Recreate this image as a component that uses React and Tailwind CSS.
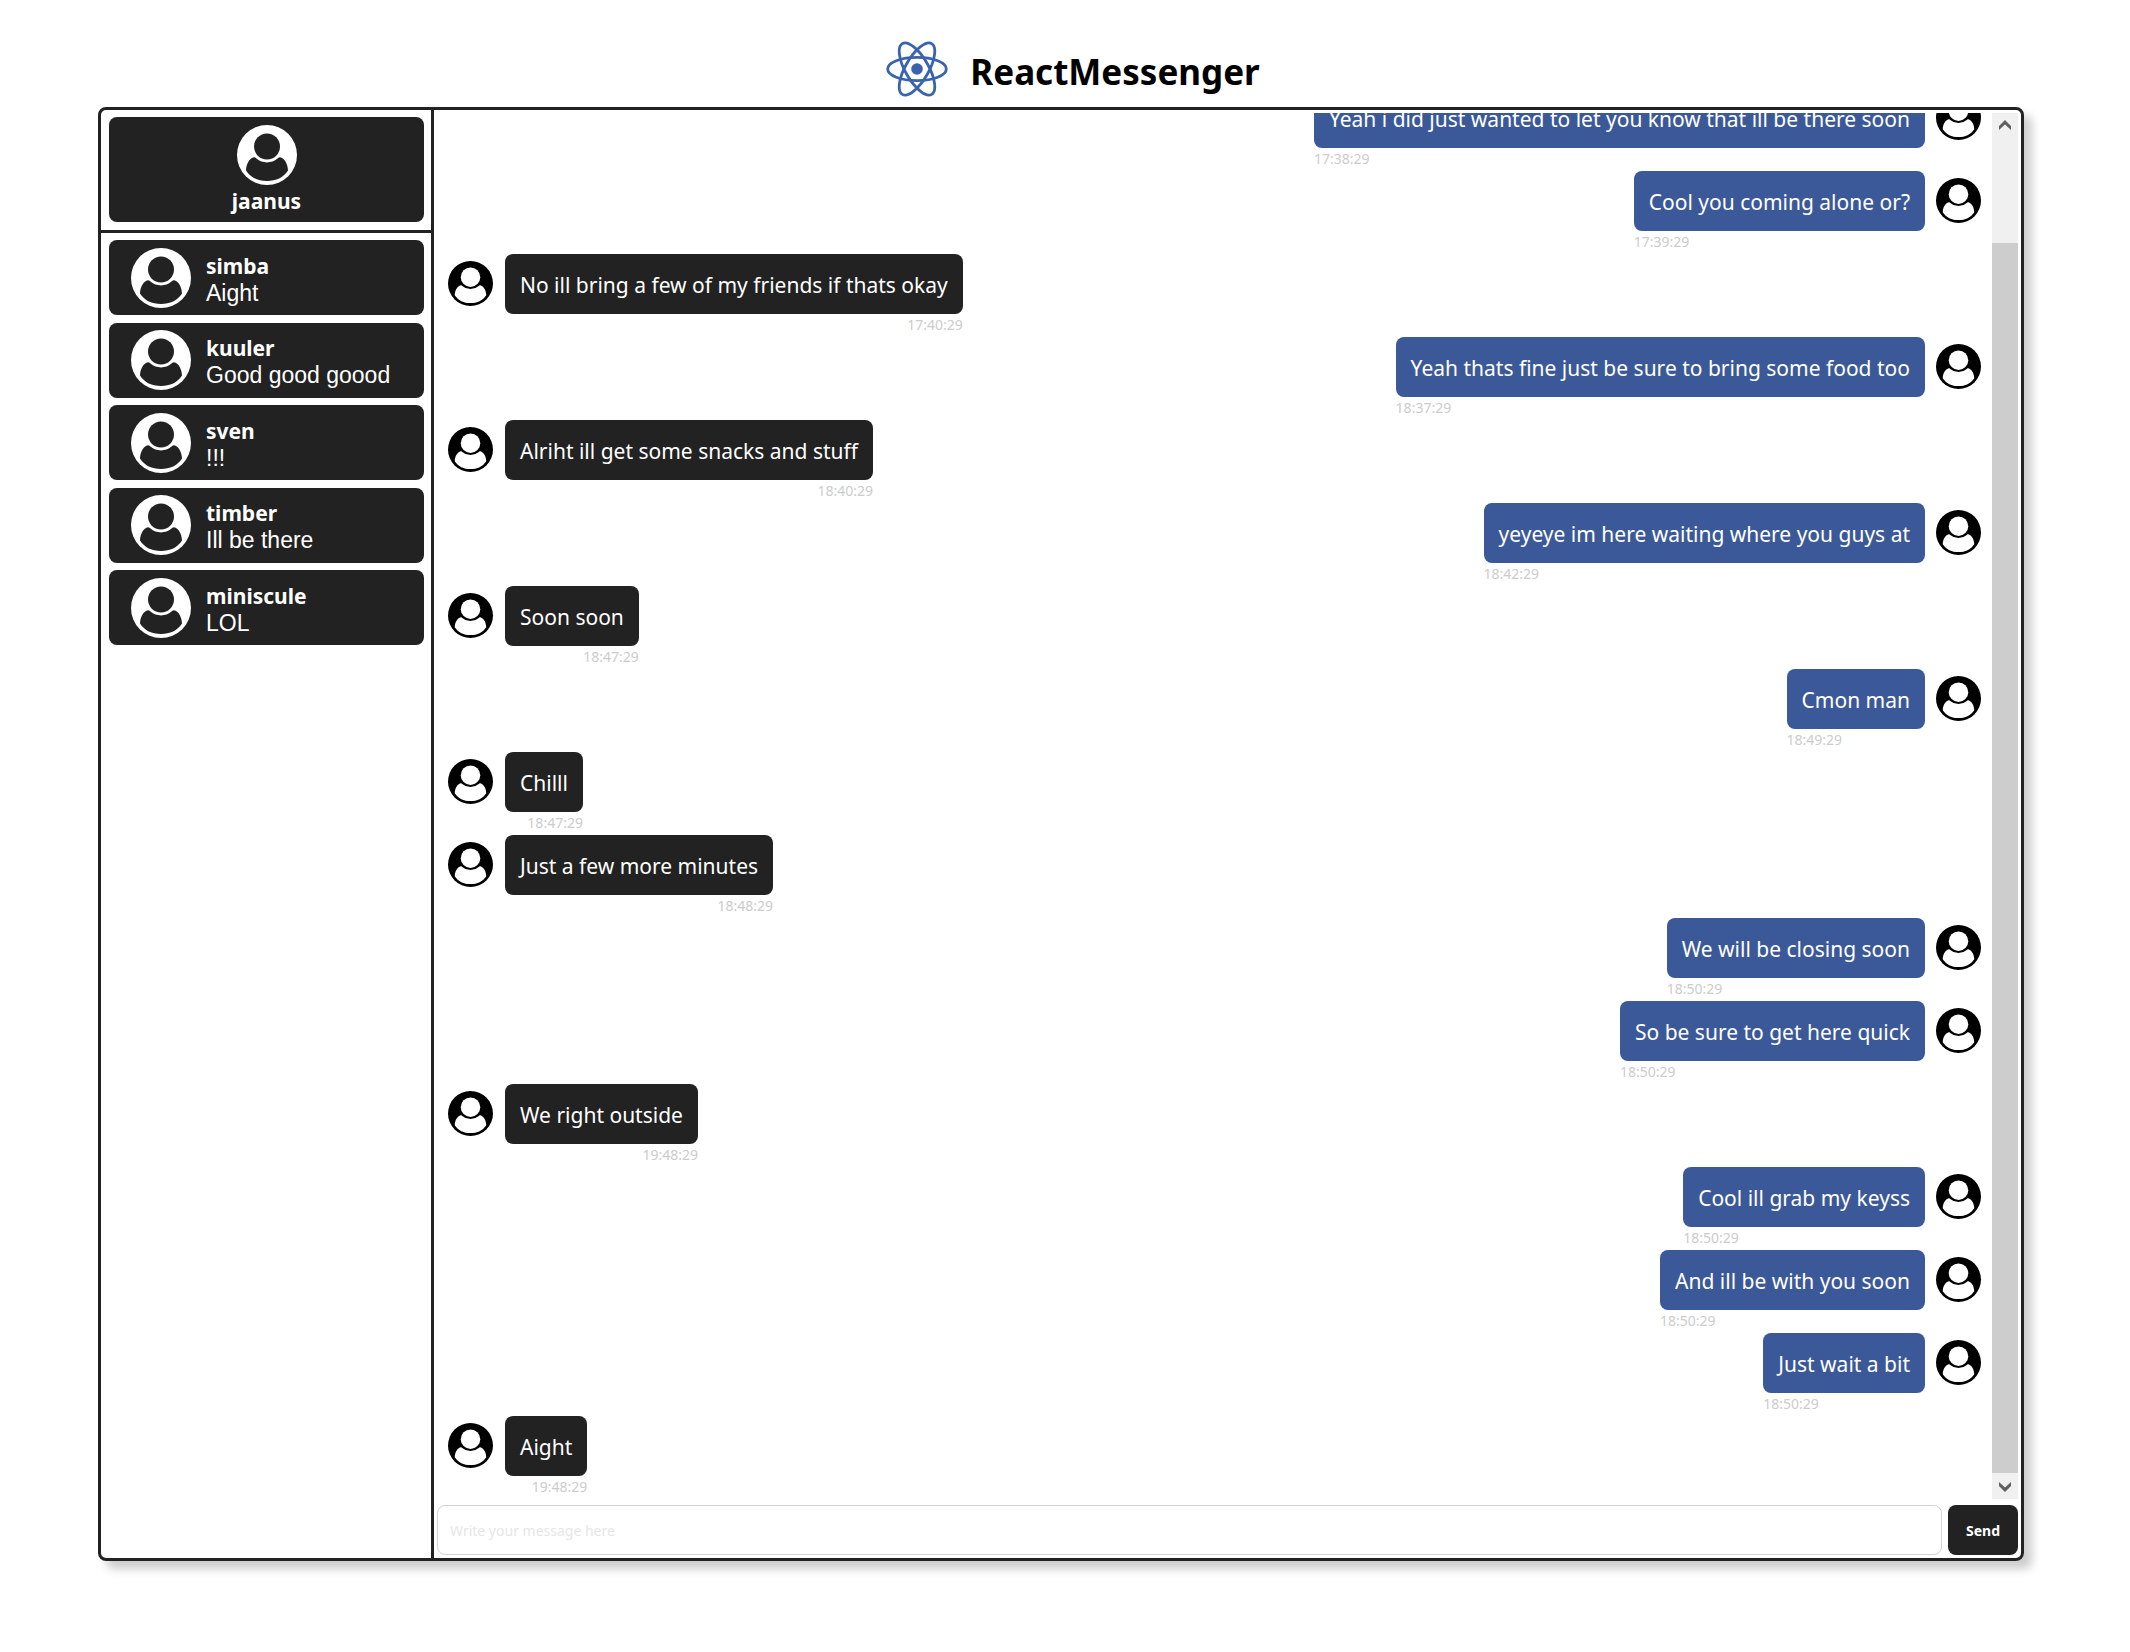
import React from "react";

const contacts = [
  { name: "simba", last: "Aight" },
  { name: "kuuler", last: "Good good goood" },
  { name: "sven", last: "!!!" },
  { name: "timber", last: "Ill be there" },
  { name: "miniscule", last: "LOL" },
];

const messages = [
  { mine: true, text: "Yeah i did just wanted to let you know that ill be there soon", time: "17:38:29" },
  { mine: true, text: "Cool you coming alone or?", time: "17:39:29" },
  { mine: false, text: "No ill bring a few of my friends if thats okay", time: "17:40:29" },
  { mine: true, text: "Yeah thats fine just be sure to bring some food too", time: "18:37:29" },
  { mine: false, text: "Alriht ill get some snacks and stuff", time: "18:40:29" },
  { mine: true, text: "yeyeye im here waiting where you guys at", time: "18:42:29" },
  { mine: false, text: "Soon soon", time: "18:47:29" },
  { mine: true, text: "Cmon man", time: "18:49:29" },
  { mine: false, text: "Chilll", time: "18:47:29" },
  { mine: false, text: "Just a few more minutes", time: "18:48:29" },
  { mine: true, text: "We will be closing soon", time: "18:50:29" },
  { mine: true, text: "So be sure to get here quick", time: "18:50:29" },
  { mine: false, text: "We right outside", time: "19:48:29" },
  { mine: true, text: "Cool ill grab my keyss", time: "18:50:29" },
  { mine: true, text: "And ill be with you soon", time: "18:50:29" },
  { mine: true, text: "Just wait a bit", time: "18:50:29" },
  { mine: false, text: "Aight", time: "19:48:29" },
];

function Avatar({ className, disc, figure }) {
  return (
    <svg viewBox="0 0 60 60" className={className} aria-hidden="true">
      <circle cx="30" cy="30" r="30" fill={disc} />
      <circle cx="30" cy="21.5" r="13" fill={figure} />
      <path
        d="M17 32.2C12.5 33 9.2 39 9 45.5C13.5 52.5 21 56 30 56C39 56 46.5 52.5 51 45.5C50.8 39 47.5 33 43 32.2C42 32 41 33 40.5 33.6A16.2 16.2 0 0 1 19.5 33.6C19 33 18 32 17 32.2Z"
        fill={figure}
      />
    </svg>
  );
}

function Logo() {
  return (
    <svg viewBox="0 0 62 56" className="h-14 w-[62px]" fill="none" stroke="#3963ad" strokeWidth="2.8" aria-hidden="true">
      <ellipse cx="31" cy="28" rx="29.3" ry="11.6" />
      <ellipse cx="31" cy="28" rx="29.3" ry="11.6" transform="rotate(60 31 28)" />
      <ellipse cx="31" cy="28" rx="29.3" ry="11.6" transform="rotate(120 31 28)" />
      <circle cx="31" cy="28" r="5.8" fill="#3963ad" stroke="none" />
    </svg>
  );
}

function Message({ mine, text, time }) {
  return (
    <li className={mine ? "flex flex-row-reverse items-start gap-[11px]" : "flex items-start gap-3"}>
      <Avatar className="mt-[7px] size-[45px] shrink-0" disc="#000" figure="#fff" />
      <div className={mine ? "flex flex-col items-start" : "flex flex-col items-end"}>
        <p
          className={
            mine
              ? "rounded-lg bg-[#3b5998] px-[15px] pt-4 pb-[14px] text-[21px] leading-[30px] whitespace-nowrap text-white"
              : "rounded-lg bg-[#222] px-[15px] pt-4 pb-[14px] text-[21px] leading-[30px] whitespace-nowrap text-white"
          }
        >
          {text}
        </p>
        <time className="h-[23px] text-[14px] leading-[22px] text-[#ccc]">{time}</time>
      </div>
    </li>
  );
}

function ScrollBar() {
  return (
    <div className="flex w-[26px] shrink-0 flex-col bg-[#f0f0f0]">
      <button type="button" aria-label="Scroll up" className="flex h-[26px] items-start justify-center pt-[7px]">
        <svg viewBox="0 0 14 10" className="h-2.5 w-3.5" aria-hidden="true">
          <path d="M7 0L13 6V10L7 4.500L1 10V6Z" fill="#606060" />
        </svg>
      </button>
      <div className="flex flex-1 flex-col pt-[104px]">
        <div className="flex-1 bg-[#cdcdcd]" />
      </div>
      <button type="button" aria-label="Scroll down" className="flex h-[26px] items-end justify-center pb-[7px]">
        <svg viewBox="0 0 14 10" className="h-2.5 w-3.5" aria-hidden="true">
          <path d="M7 10L13 4V0L7 5.500L1 0V4Z" fill="#606060" />
        </svg>
      </button>
    </div>
  );
}

export default function App() {
  return (
    <div className="flex h-screen flex-col bg-white pr-[106px] pb-[91px] pl-[98px] font-['Noto_Sans',sans-serif]">
      <header className="flex h-[107px] items-end justify-center gap-[22px] pb-[10px] pl-6">
        <Logo />
        <h1 className="text-[35px] leading-[50px] font-bold text-black">ReactMessenger</h1>
      </header>

      <main className="flex min-h-0 flex-1 rounded-lg border-3 border-[#222] shadow-[8px_8px_10px_rgba(0,0,0,0.2)]">
        <aside className="flex w-[333px] shrink-0 flex-col border-r-3 border-[#222]">
          <div className="border-b-3 border-[#222] px-2 pt-[7px] pb-2">
            <div className="flex h-[105px] w-[315px] flex-col items-center rounded-lg bg-[#222] pt-2">
              <Avatar className="size-[60px] shrink-0" disc="#fff" figure="#222" />
              <h2 className="text-[21px] leading-[32px] font-bold text-white">jaanus</h2>
            </div>
          </div>
          <ul className="mt-[7px] flex min-h-[405px] flex-col justify-between px-2">
            {contacts.map((c) => (
              <li key={c.name}>
                <button type="button" className="flex h-[75px] w-[315px] items-center gap-[15px] rounded-lg bg-[#222] pl-[22px] text-left text-white">
                  <Avatar className="size-[60px] shrink-0" disc="#fff" figure="#222" />
                  <span className="flex flex-col pt-1">
                    <span className="text-[21px] leading-[27px] font-bold">{c.name}</span>
                    <span className="font-['Liberation_Sans',sans-serif] text-[23px] leading-[27px]">{c.last}</span>
                  </span>
                </button>
              </li>
            ))}
          </ul>
        </aside>

        <section className="flex min-w-0 flex-1 flex-col gap-1.5 p-[3px]">
          <div className="flex min-h-0 flex-1">
            <ul className="flex min-w-0 flex-1 flex-col justify-end overflow-hidden px-[11px]">
              {messages.map((m, i) => (
                <Message key={i} {...m} />
              ))}
            </ul>
            <ScrollBar />
          </div>
          <form className="flex h-[50px] shrink-0 gap-1.5" onSubmit={(e) => e.preventDefault()}>
            <input
              type="text"
              aria-label="Message"
              placeholder="Write your message here"
              className="min-w-0 flex-1 rounded-lg border border-[#d3d3d3] bg-white px-3 text-[14px] text-black placeholder:text-[#e6e6e6]"
            />
            <button type="submit" className="w-[70px] rounded-lg bg-[#222] text-[14px] font-bold text-white">
              Send
            </button>
          </form>
        </section>
      </main>
    </div>
  );
}
